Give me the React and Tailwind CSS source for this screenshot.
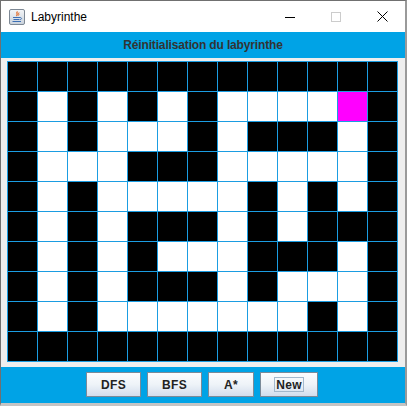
import React from "react";

const MAZE = [
  "BBBBBBBBBBBBB",
  "BWBWBWBWWWWMB",
  "BWBWWWBWBBBWB",
  "BWWWBBBWWWWWB",
  "BWBWWWWWBWBWB",
  "BWBWBBBWBWBBB",
  "BWBWBWWWBBBWB",
  "BWBWBBBWBWWWB",
  "BWBWWWWWWWBWB",
  "BBBBBBBBBBBBB",
];

const cellClass = {
  B: "bg-black",
  W: "bg-white",
  M: "bg-[#ff00ff]",
};

function JavaIcon() {
  return (
    <svg width="16" height="16" viewBox="0 0 16 16">
      <defs>
        <linearGradient id="jg" x1="0" y1="0" x2="0" y2="1">
          <stop offset="0" stopColor="#f4f6f8" />
          <stop offset="1" stopColor="#c9d2dc" />
        </linearGradient>
      </defs>
      <rect x="0.5" y="0.5" width="15" height="15" rx="1.5" fill="url(#jg)" stroke="#7d8894" />
      <path d="M8.5 2.5 C6.5 4 9.5 5 7.5 7" stroke="#e2621b" strokeWidth="1.2" fill="none" />
      <path d="M10 3.5 C9 4.5 10.5 5.5 9.5 6.5" stroke="#e2621b" strokeWidth="1" fill="none" />
      <path d="M4 8.5 H11 M4.5 10.5 H10.5 M3.5 12.5 H12" stroke="#3d6fb5" strokeWidth="1" fill="none" />
      <path d="M11 8.5 C13 8.5 13 10.5 11 10.5" stroke="#3d6fb5" strokeWidth="1" fill="none" />
    </svg>
  );
}

function Btn({ children, w, focus }) {
  return (
    <button
      className={`h-[25px] ${w} flex items-center justify-center border border-[#7a8a99] bg-gradient-to-b from-[#fbfcfe] via-[#eef3f8] to-[#d2dded] text-[12px] font-bold text-[#222222] leading-none tracking-[0.3px]`}
      style={{ fontFamily: '"Liberation Sans", Arial, sans-serif' }}
    >
      {focus ? (
        <span className="border border-[#a3b8cc] px-[1px] h-[15px] flex items-center">{children}</span>
      ) : (
        children
      )}
    </button>
  );
}

export default function App() {
  return (
    <div
      className="w-[407px] h-[406px] flex flex-col bg-[#eeeeee] border-l border-t border-[#707070] border-r-2 border-r-[#9a9a9a] border-b-[3px] border-b-[#c4c4c4]"
      style={{ fontFamily: '"Liberation Sans", Arial, sans-serif' }}
    >
      {/* Title bar */}
      <div className="h-[31px] bg-white flex items-center shrink-0">
        <div className="pl-[8px] pr-[6px] flex items-center">
          <JavaIcon />
        </div>
        <span className="text-[12px] text-black leading-none pt-[1px]">Labyrinthe</span>
        <div className="ml-auto flex h-full">
          <div className="w-[46px] h-full flex items-center justify-center">
            <div className="w-[10px] h-px bg-black mt-[2px]" />
          </div>
          <div className="w-[46px] h-full flex items-center justify-center">
            <div className="w-[10px] h-[10px] border border-[#cccccc]" />
          </div>
          <div className="w-[46px] h-full flex items-center justify-center">
            <svg width="11" height="11" viewBox="0 0 11 11">
              <path d="M0.5 0.5 L10.5 10.5 M10.5 0.5 L0.5 10.5" stroke="#000" strokeWidth="1" />
            </svg>
          </div>
        </div>
      </div>

      {/* Top blue bar */}
      <div className="h-[26px] bg-[#00a3e6] flex items-center justify-center shrink-0">
        <span className="text-[12px] font-bold text-[#333333] tracking-[-0.15px] leading-none">
          Réinitialisation du labyrinthe
        </span>
      </div>

      {/* Maze area */}
      <div className="h-[309px] pt-[3px] pl-[6px] shrink-0">
        <div className="w-[391px] h-[301px] bg-[#1b9de2] p-px grid grid-cols-[repeat(13,29px)] grid-rows-[repeat(10,29px)] gap-px">
          {MAZE.map((row, r) =>
            row.split("").map((c, i) => <div key={`${r}-${i}`} className={cellClass[c]} />)
          )}
        </div>
      </div>

      {/* Bottom bar */}
      <div className="flex-1 bg-[#00a3e6] flex justify-center pt-[5px] gap-[6px] pr-[2px]">
        <Btn w="w-[55px]">DFS</Btn>
        <Btn w="w-[55px]">BFS</Btn>
        <Btn w="w-[46px]">A*</Btn>
        <Btn w="w-[58px]" focus>
          New
        </Btn>
      </div>
    </div>
  );
}
